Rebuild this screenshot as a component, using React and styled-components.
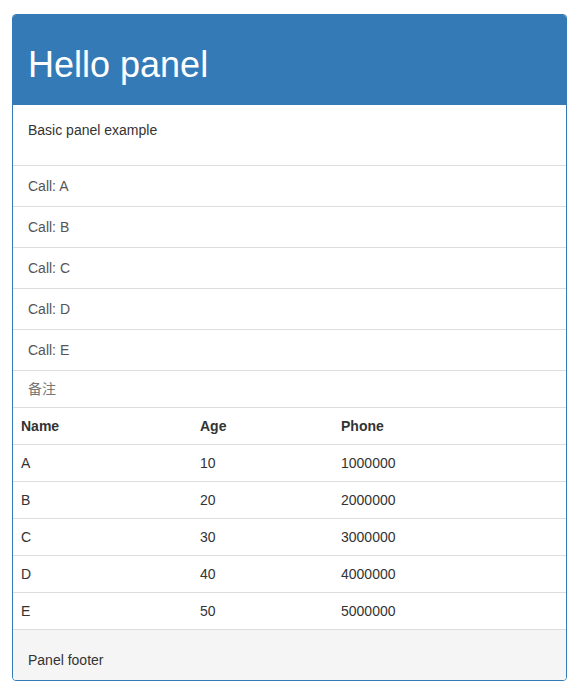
import React from "react";
import styled, { createGlobalStyle } from "styled-components";

const Global = createGlobalStyle`
  * { box-sizing: border-box; }
  body {
    margin: 0;
    background: #fff;
    font-family: "Liberation Sans", Arial, "Noto Sans CJK SC", sans-serif;
    font-size: 14px;
    line-height: 20px;
    color: #333;
  }
`;

const Page = styled.div`
  padding: 14px 18px 20px 12px;
`;

const Panel = styled.div`
  border: 1px solid #337ab7;
  border-radius: 4px;
  background: #fff;
  overflow: hidden;
`;

const Heading = styled.div`
  background: #337ab7;
  color: #fff;
  padding: 10px 15px;
  border-bottom: 1px solid #337ab7;
`;

const Title = styled.h1`
  margin: 20px 0 10px;
  font-size: 36px;
  font-weight: 500;
  line-height: 39px;
  font-family: "Liberation Sans", Arial, sans-serif;
`;

const Body = styled.div`
  padding: 15px;
`;

const Para = styled.p`
  margin: 0 0 10px;
`;

const List = styled.ul`
  list-style: none;
  margin: 0;
  padding: 0;
`;

const Item = styled.li`
  padding: 10px 15px;
  border-top: 1px solid #ddd;
  color: #555;
`;

const Table = styled.table`
  width: 100%;
  border-collapse: collapse;
  border-spacing: 0;
`;

const Caption = styled.caption`
  caption-side: top;
  text-align: left;
  padding: 8px 15px;
  color: #777;
  border-top: 1px solid #ddd;
`;

const Cell = styled.td`
  padding: 8px;
  border-top: 1px solid #ddd;
  text-align: left;
  vertical-align: top;
  width: ${(p) => p.$w || "auto"};
  font-weight: ${(p) => (p.$head ? 700 : 400)};
`;

const Footer = styled.div`
  background: #f5f5f5;
  border-top: 1px solid #ddd;
  padding: 20px 15px 10px;
`;

const calls = ["A", "B", "C", "D", "E"];
const rows = [
  ["A", "10", "1000000"],
  ["B", "20", "2000000"],
  ["C", "30", "3000000"],
  ["D", "40", "4000000"],
  ["E", "50", "5000000"],
];
const widths = ["179px", "141px", "auto"];

export default function App() {
  return (
    <>
      <Global />
      <Page>
        <Panel>
          <Heading>
            <Title>Hello panel</Title>
          </Heading>
          <Body>
            <Para>Basic panel example</Para>
          </Body>
          <List>
            {calls.map((c) => (
              <Item key={c}>Call: {c}</Item>
            ))}
          </List>
          <Table>
            <Caption>备注</Caption>
            <tbody>
              <tr>
                {["Name", "Age", "Phone"].map((h, i) => (
                  <Cell as="th" key={h} $head $w={widths[i]}>
                    {h}
                  </Cell>
                ))}
              </tr>
              {rows.map((r) => (
                <tr key={r[0]}>
                  {r.map((v, i) => (
                    <Cell key={i} $w={widths[i]}>
                      {v}
                    </Cell>
                  ))}
                </tr>
              ))}
            </tbody>
          </Table>
          <Footer>Panel footer</Footer>
        </Panel>
      </Page>
    </>
  );
}
